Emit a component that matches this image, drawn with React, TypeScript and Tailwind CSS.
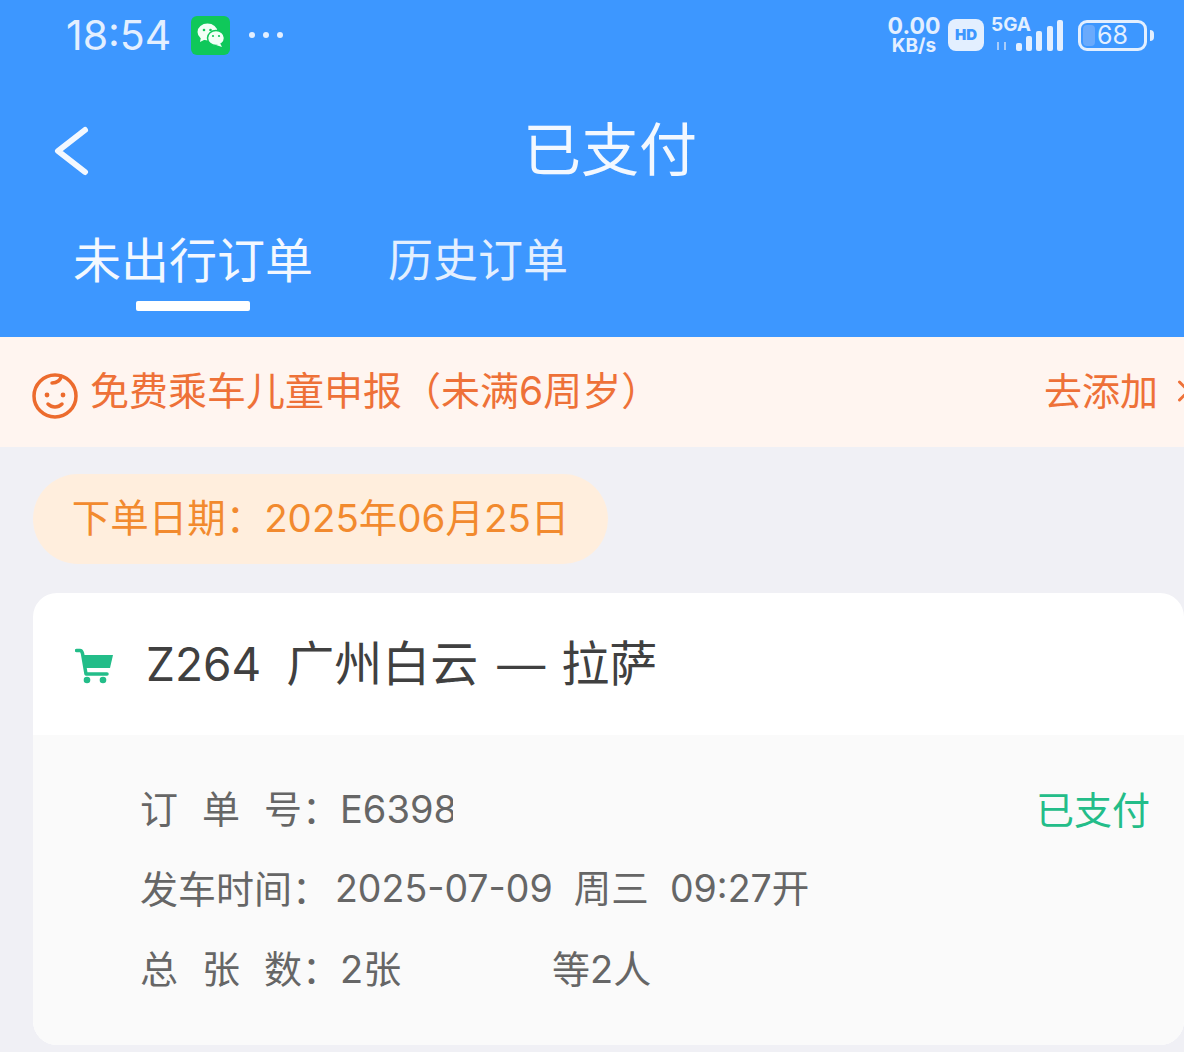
import React from "react";
import { ChevronRight } from "lucide-react";

const font = { fontFamily: '"Inter", "Noto Sans CJK SC", "Noto Sans", sans-serif' };

function WeChatBadge() {
  return (
    <div className="flex h-[39px] w-[39px] items-center justify-center rounded-[6px] bg-[#0fc85a]">
      <svg width="30" height="26" viewBox="0 0 30 26">
        <ellipse cx="11.500" cy="10" rx="10" ry="8.500" fill="#f2fff6" />
        <path d="M5 15l-1 5 6-3z" fill="#f2fff6" />
        <ellipse cx="20" cy="16" rx="8.500" ry="7.500" fill="#f2fff6" stroke="#0fc85a" strokeWidth="1.500" />
        <path d="M24 21l2 4-6-2z" fill="#f2fff6" />
        <circle cx="8" cy="8" r="1.300" fill="#0fc85a" />
        <circle cx="14.500" cy="8" r="1.300" fill="#0fc85a" />
        <circle cx="17" cy="14" r="1.100" fill="#0fc85a" />
        <circle cx="23" cy="14" r="1.100" fill="#0fc85a" />
      </svg>
    </div>
  );
}

function StatusRight() {
  return (
    <div className="flex items-center text-[#e3efff]">
      <div className="flex w-[54px] flex-col items-center font-bold">
        <span className="text-[23px] leading-[21px]">0.00</span>
        <span className="text-[19px] leading-[17px]">KB/s</span>
      </div>
      <div className="ml-[7px] flex h-[32px] w-[36px] items-center justify-center rounded-[8px] bg-[#e3efff] text-[15px] font-black text-[#3d97ff]">
        HD
      </div>
      <div className="relative ml-[6px] h-[38px] w-[76px]">
        <span className="absolute left-[1px] top-[-3px] text-[19px] font-bold leading-[24px]">5GA</span>
        <svg width="76" height="38" viewBox="0 0 76 38">
          <rect x="26" y="27" width="6" height="8" rx="2" fill="#e3efff" />
          <rect x="36" y="20" width="6" height="15" rx="2" fill="#e3efff" />
          <rect x="46" y="15" width="6" height="20" rx="2" fill="#e3efff" />
          <rect x="57" y="10" width="6" height="25" rx="2" fill="#e3efff" />
          <rect x="67" y="4" width="6" height="31" rx="2" fill="#e3efff" />
          <path d="M8 26v8M15 26v8" stroke="#a9cdfa" strokeWidth="2" />
        </svg>
      </div>
      <div className="relative ml-[12px] flex h-[31px] w-[69px] items-center justify-center rounded-[9px] border-[3px] border-[#e3efff] text-[25px]">
        <div className="absolute inset-y-[2px] left-[2px] w-[12px] rounded-[4px] bg-[#6aaafc]" />
        <span className="relative leading-none">68</span>
      </div>
      <div className="ml-[3px] h-[11px] w-[4px] rounded-r-full bg-[#e3efff]" />
    </div>
  );
}

function BabyFace() {
  return (
    <svg width="46" height="46" viewBox="0 0 46 46" fill="none" stroke="#ec6b2d" strokeWidth="3.500" strokeLinecap="round">
      <circle cx="23" cy="23" r="21" />
      <path d="M29 3c0 4-4 7-9 7" />
      <circle cx="15" cy="22" r="2.400" fill="#ec6b2d" stroke="none" />
      <circle cx="31" cy="22" r="2.400" fill="#ec6b2d" stroke="none" />
      <path d="M16 31c4 4 10 4 14 0" />
    </svg>
  );
}

function Cart() {
  return (
    <svg width="38" height="36" viewBox="0 0 38 36" fill="#23bd89">
      <path d="M1.500 2.500H5c1 0 2 1 2.500 3L11 26h21" fill="none" stroke="#23bd89" strokeWidth="3.500" strokeLinecap="round" strokeLinejoin="round" />
      <path d="M8 7h30l-3 13H11z" />
      <circle cx="12" cy="32" r="3.300" />
      <circle cx="28" cy="32" r="3.300" />
    </svg>
  );
}

function InfoRow({ label, children }: { label: React.ReactNode; children: React.ReactNode }) {
  return (
    <div className="flex h-[80px] items-center text-[38px] text-[#666666]">
      <span className="flex w-[200px] shrink-0">{label}</span>
      {children}
    </div>
  );
}

export default function App() {
  return (
    <div className="h-[1052px] w-[1184px] overflow-hidden bg-[#f0f0f5]" style={font}>
      {/* Blue header */}
      <div className="h-[337px] bg-[#3d97ff] text-white">
        <div className="flex h-[70px] items-center justify-between pl-[66px] pr-[30px]">
          <div className="flex items-center">
            <span className="text-[41px] leading-none text-[#e3efff]">18:54</span>
            <div className="ml-[20px]"><WeChatBadge /></div>
            <div className="ml-[19px] flex gap-[8px]">
              <span className="h-[6px] w-[6px] rounded-full bg-[#e3efff]" />
              <span className="h-[6px] w-[6px] rounded-full bg-[#e3efff]" />
              <span className="h-[6px] w-[6px] rounded-full bg-[#e3efff]" />
            </div>
          </div>
          <StatusRight />
        </div>
        <div className="relative flex h-[160px] items-center justify-center pl-[36px]">
          <svg width="40" height="56" viewBox="0 0 40 56" fill="none" className="absolute left-[52px] top-[53px]">
            <path d="M33 7L6 28l27 21" stroke="#f3f8ff" strokeWidth="6" strokeLinecap="round" strokeLinejoin="round" />
          </svg>
          <span className="text-[58px] leading-none text-[#f3f8ff]">已支付</span>
        </div>
        <div className="flex pl-[73px] pt-[1px]">
          <div className="flex flex-col items-center">
            <span className="text-[48px] leading-[60px] text-[#f3f8ff]">未出行订单</span>
            <div className="mt-[10px] h-[10px] w-[114px] rounded-[2px] bg-white" />
          </div>
          <span className="ml-[75px] text-[45px] leading-[60px] text-[#e3efff]">历史订单</span>
        </div>
      </div>

      {/* Child notice */}
      <div className="flex h-[110px] items-center justify-between bg-[#fff5f0] pl-[32px] text-[39px] text-[#ee7138]">
        <div className="flex items-center">
          <div className="mt-[7px]"><BabyFace /></div>
          <span className="ml-[12px] pb-[2px]">免费乘车儿童申报（未满6周岁）</span>
        </div>
        <div className="flex items-center pb-[2px] text-[38px]">
          <span>去添加</span>
          <ChevronRight className="ml-[8px] mr-[-18px] text-[#ee7138]" size={36} strokeWidth={2} />
        </div>
      </div>

      {/* Date pill */}
      <div className="px-[33px] pt-[27px]">
        <div className="flex h-[90px] w-[575px] items-center justify-center rounded-full bg-[#ffeedd] text-[38.500px] text-[#f28a2e]">
          下单日期：2025年06月25日
        </div>

        {/* Order card */}
        <div className="mt-[29px] mr-[-33px] overflow-hidden rounded-[24px] bg-white">
          <div className="flex h-[142px] items-center pl-[42px]">
            <div className="mt-[3px]"><Cart /></div>
            <div className="ml-[33px] flex items-center text-[48px] leading-none text-[#404040]">
              <span className="text-[46px]">Z264</span>
              <span className="ml-[25px]">广州白云</span>
              <span className="ml-[19px] font-medium" style={{ fontFamily: '"Liberation Sans", sans-serif' }}>—</span>
              <span className="ml-[16px]">拉萨</span>
            </div>
          </div>
          <div className="relative h-[310px] bg-[#fafafa] pl-[107px] pt-[34px]">
            <InfoRow label={<><span className="w-[62px]">订</span><span className="w-[62px]">单</span><span>号：</span></>}>
              <span className="block w-[113px] overflow-hidden whitespace-nowrap">E6398</span>
            </InfoRow>
            <InfoRow label="发车时间：">
              <span className="ml-[-5px] whitespace-pre text-[37.500px]">2025-07-09  周三  09:27开</span>
            </InfoRow>
            <InfoRow label={<><span className="w-[62px]">总</span><span className="w-[62px]">张</span><span>数：</span></>}>
              <span className="w-[212px]">2张</span>
              <span>等2人</span>
            </InfoRow>
            <span className="absolute right-[34px] top-[47px] text-[38px] text-[#23bd89]">已支付</span>
          </div>
        </div>
      </div>
    </div>
  );
}
